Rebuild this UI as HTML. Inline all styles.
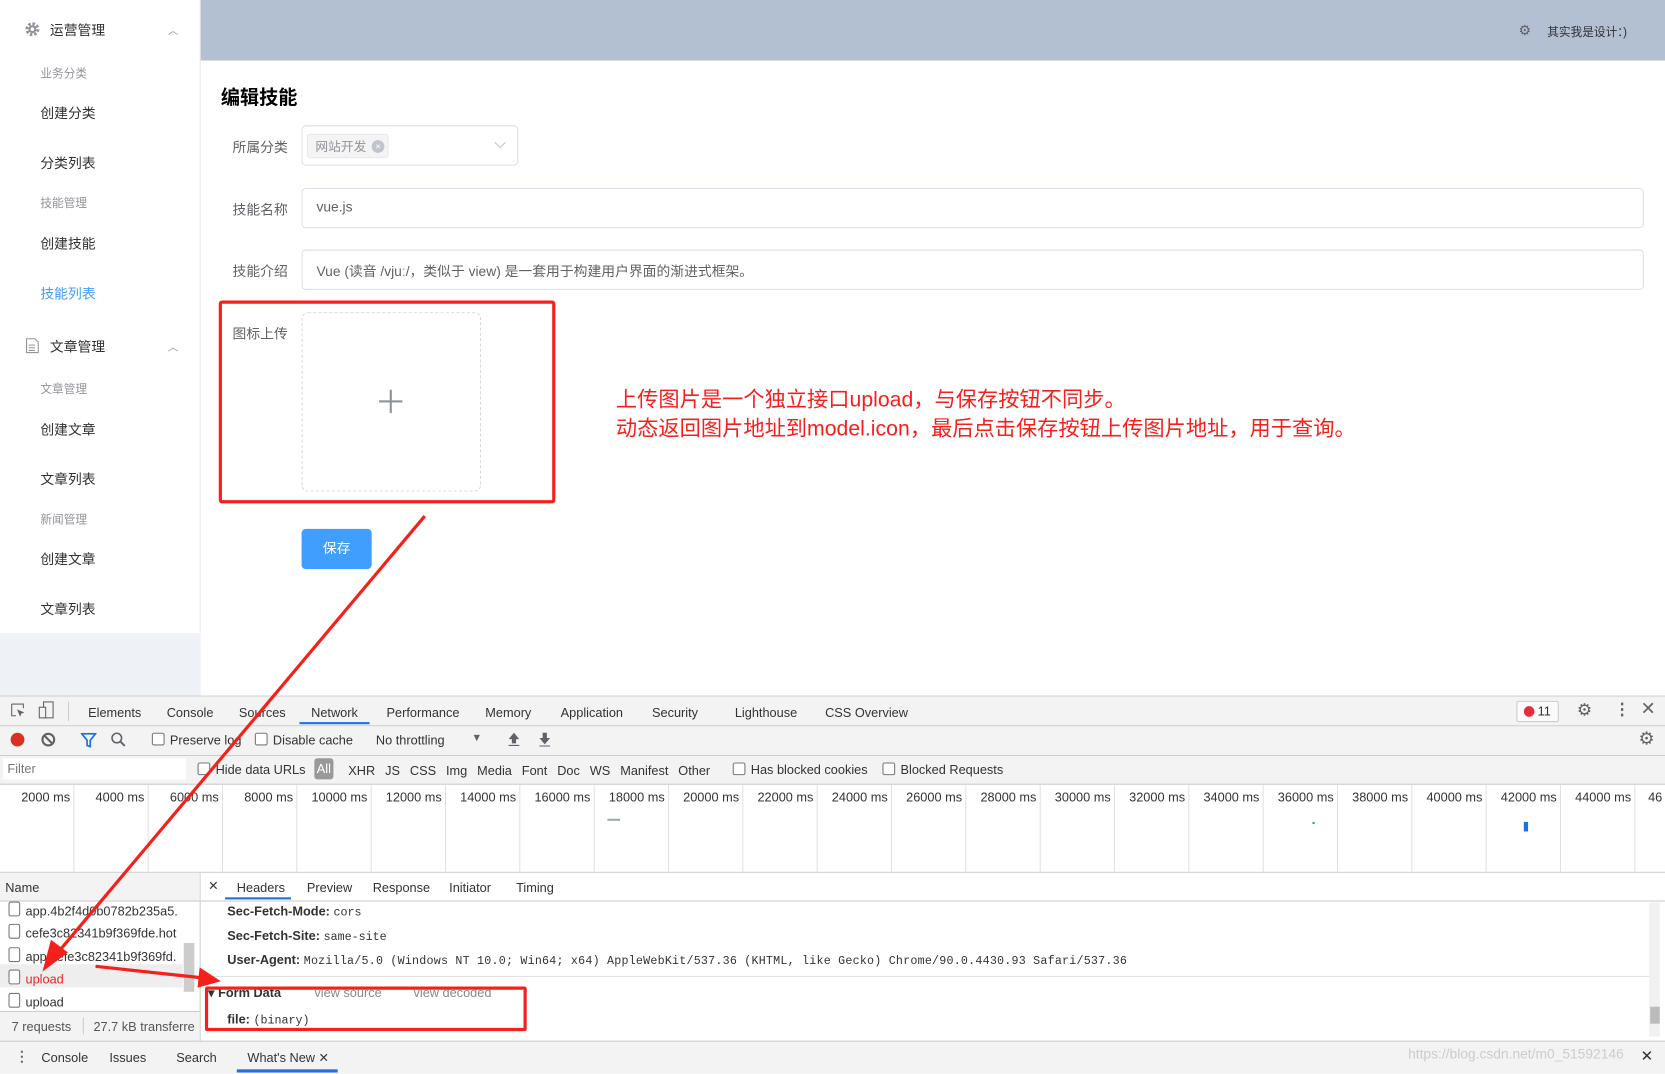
<!DOCTYPE html>
<html><head><meta charset="utf-8"><style>
html,body{margin:0;padding:0;width:1665px;height:1072px;overflow:hidden;background:#fff}
#w{position:absolute;left:0;top:0;width:1568px;height:1010px;transform:scale(1.0619);transform-origin:0 0;font-family:"Liberation Sans","Noto Sans CJK SC",sans-serif;}
.a{position:absolute;white-space:nowrap}
.sb{font-size:13px;color:#303133}
.grp{font-size:11px;color:#909399}
.lbl{font-size:13px;color:#606266}
.in{position:absolute;border:1px solid #dcdfe6;border-radius:4px;background:#fff;box-sizing:border-box}
.dt{font-size:12px;color:#333}
.cb{display:inline-block;width:10px;height:10px;border:1px solid #777;border-radius:2px;vertical-align:-1px;margin-right:5px;background:#fff}
</style></head><body><div id="w">
<div class="a" style="left:0;top:0;width:188px;height:596px;background:#fff;border-right:1px solid #e6e6e6"></div>
<div class="a" style="left:0;top:596px;width:189px;height:59px;background:#eef1f6"></div>
<svg class="a" style="left:23px;top:20px" width="15" height="15" viewBox="0 0 16 16"><circle cx="8" cy="8" r="5.5" fill="none" stroke="#909399" stroke-width="3" stroke-dasharray="2.5 1.8"/><circle cx="8" cy="8" r="4" fill="#909399"/><circle cx="8" cy="8" r="1.8" fill="#fff"/></svg>
<div class="a sb" style="left:47px;top:18px">运营管理</div>
<div class="a" style="left:158px;top:20px;color:#909399;font-size:10px">︿</div>
<div class="a grp" style="left:38px;top:61px">业务分类</div>
<div class="a sb" style="left:38px;top:96px">创建分类</div>
<div class="a sb" style="left:38px;top:143px">分类列表</div>
<div class="a grp" style="left:38px;top:183px">技能管理</div>
<div class="a sb" style="left:38px;top:219px">创建技能</div>
<div class="a sb" style="left:38px;top:266px;color:#409eff">技能列表</div>
<svg class="a" style="left:24px;top:318px" width="13" height="15" viewBox="0 0 13 15"><path d="M1 1h8l3 3v10H1z" fill="none" stroke="#909399"/><path d="M3 7h6M3 9.5h6M3 12h6" stroke="#909399"/></svg>
<div class="a sb" style="left:47px;top:316px">文章管理</div>
<div class="a" style="left:158px;top:318px;color:#909399;font-size:10px">︿</div>
<div class="a grp" style="left:38px;top:358px">文章管理</div>
<div class="a sb" style="left:38px;top:394px">创建文章</div>
<div class="a sb" style="left:38px;top:441px">文章列表</div>
<div class="a grp" style="left:38px;top:481px">新闻管理</div>
<div class="a sb" style="left:38px;top:516px">创建文章</div>
<div class="a sb" style="left:38px;top:563px">文章列表</div>
<div class="a" style="left:189px;top:0;width:1379px;height:57px;background:#b3c0d1"></div>
<div class="a" style="left:1430px;top:21px;color:#606266;font-size:13px">⚙</div>
<div class="a" style="left:1457px;top:22px;font-size:11px;color:#303133">其实我是设计：)</div>
<div class="a" style="left:208px;top:78px;font-size:18px;font-weight:bold;color:#000">编辑技能</div>
<div class="a lbl" style="left:219px;top:128px">所属分类</div>
<div class="in" style="left:284px;top:118px;width:204px;height:38px"></div>
<div class="a" style="left:289px;top:126px;width:77px;height:23px;background:#f4f4f5;border:1px solid #e9e9eb;border-radius:3px;box-sizing:border-box"></div>
<div class="a" style="left:297px;top:129px;font-size:12px;color:#909399">网站开发</div>
<div class="a" style="left:350px;top:132px;width:12px;height:12px;border-radius:6px;background:#c0c4cc;color:#fff;font-size:9px;text-align:center;line-height:12px">×</div>
<svg class="a" style="left:465px;top:133px" width="12" height="8"><path d="M1 1l5 5 5-5" fill="none" stroke="#c0c4cc"/></svg>
<div class="a lbl" style="left:219px;top:187px">技能名称</div>
<div class="in" style="left:284px;top:177px;width:1264px;height:38px"></div>
<div class="a" style="left:298px;top:187px;font-size:13px;color:#606266">vue.js</div>
<div class="a lbl" style="left:219px;top:245px">技能介绍</div>
<div class="in" style="left:284px;top:235px;width:1264px;height:38px"></div>
<div class="a" style="left:298px;top:245px;font-size:13px;color:#606266">Vue (读音 /vjuː/，类似于 view) 是一套用于构建用户界面的渐进式框架。</div>
<div class="a lbl" style="left:219px;top:304px">图标上传</div>
<div class="a" style="left:284px;top:294px;width:169px;height:169px;border:1px dashed #d9d9d9;border-radius:6px;box-sizing:border-box"></div>
<div class="a" style="left:357px;top:377px;width:22px;height:1.5px;background:#8c939d"></div>
<div class="a" style="left:367px;top:367px;width:1.5px;height:22px;background:#8c939d"></div>
<div class="a" style="left:206px;top:283px;width:317px;height:191px;border:3px solid #f5201a;border-radius:3px;box-sizing:border-box"></div>
<div class="a" style="left:580px;top:364px;font-size:20px;color:#f5201a;line-height:27px">上传图片是一个独立接口upload，与保存按钮不同步。<br>动态返回图片地址到model.icon，最后点击保存按钮上传图片地址，用于查询。</div>
<div class="a" style="left:284px;top:498px;width:66px;height:38px;background:#409eff;border-radius:4px;color:#fff;font-size:13px;text-align:center;line-height:38px">保存</div>
<div class="a" style="left:0;top:655px;width:1568px;height:355px;background:#fff;border-top:1px solid #ccc"></div>
<div class="a" style="left:0;top:656px;width:1568px;height:27px;background:#f3f3f3;border-bottom:1px solid #ccc"></div>
<svg class="a" style="left:9px;top:661px" width="16" height="16"><path d="M2 2h11v4M2 2v11h4" fill="none" stroke="#5f6368"/><path d="M7 7l7 3-3 1-1 3z" fill="#5f6368"/></svg>
<svg class="a" style="left:36px;top:660px" width="16" height="18"><rect x="5" y="1" width="9" height="15" fill="none" stroke="#5f6368"/><rect x="1" y="6" width="6" height="10" fill="#f3f3f3" stroke="#5f6368"/></svg>
<div class="a" style="left:64px;top:661px;width:1px;height:18px;background:#ccc"></div>
<div class="a dt" style="left:83px;top:664px">Elements</div>
<div class="a dt" style="left:157px;top:664px">Console</div>
<div class="a dt" style="left:225px;top:664px">Sources</div>
<div class="a dt" style="left:293px;top:664px">Network</div>
<div class="a" style="left:282px;top:680px;width:66px;height:2px;background:#1a73e8"></div>
<div class="a dt" style="left:364px;top:664px">Performance</div>
<div class="a dt" style="left:457px;top:664px">Memory</div>
<div class="a dt" style="left:528px;top:664px">Application</div>
<div class="a dt" style="left:614px;top:664px">Security</div>
<div class="a dt" style="left:692px;top:664px">Lighthouse</div>
<div class="a dt" style="left:777px;top:664px">CSS Overview</div>
<div class="a" style="left:1428px;top:660px;width:38px;height:18px;border:1px solid #ccc;border-radius:2px;background:#fafafa;font-size:12px;color:#333;line-height:18px"><span style="display:inline-block;width:10px;height:10px;border-radius:5px;background:#e52d3b;margin:0 3px 0 6px;vertical-align:-1px"></span>11</div>
<div class="a" style="left:1485px;top:659px;font-size:16px;color:#5f6368">⚙</div>
<div class="a" style="left:1520px;top:659px;font-size:15px;color:#5f6368;font-weight:bold">⋮</div>
<div class="a" style="left:1545px;top:658px;font-size:17px;color:#5f6368">✕</div>
<div class="a" style="left:0;top:684px;width:1568px;height:27px;background:#f3f3f3;border-bottom:1px solid #ccc"></div>
<div class="a" style="left:10px;top:690px;width:13px;height:13px;border-radius:7px;background:#d93025"></div>
<svg class="a" style="left:38px;top:689px" width="15" height="15"><circle cx="7.5" cy="7.5" r="5.5" fill="none" stroke="#5f6368" stroke-width="2"/><path d="M4 4l7 7" stroke="#5f6368" stroke-width="2"/></svg>
<svg class="a" style="left:76px;top:690px" width="15" height="14"><path d="M1 1h13l-5 6v6l-3-1V7z" fill="none" stroke="#1a73e8" stroke-width="1.6"/></svg>
<svg class="a" style="left:104px;top:689px" width="15" height="15"><circle cx="6" cy="6" r="4.5" fill="none" stroke="#5f6368" stroke-width="1.5"/><path d="M9.5 9.5l4 4" stroke="#5f6368" stroke-width="1.8"/></svg>
<div class="a dt" style="left:143px;top:690px"><span class="cb"></span>Preserve log</div>
<div class="a dt" style="left:240px;top:690px"><span class="cb"></span>Disable cache</div>
<div class="a dt" style="left:354px;top:690px">No throttling</div>
<div class="a" style="left:444px;top:690px;font-size:10px;color:#5f6368">▼</div>
<svg class="a" style="left:478px;top:689px" width="12" height="14"><path d="M6 1L1 7h3v4h4V7h3z" fill="#5f6368"/><path d="M1 13h10" stroke="#5f6368"/></svg>
<svg class="a" style="left:507px;top:689px" width="12" height="14"><path d="M6 12L1 6h3V1h4v5h3z" fill="#5f6368"/><path d="M1 13.5h10" stroke="#5f6368"/></svg>
<div class="a" style="left:1543px;top:686px;font-size:17px;color:#5f6368">⚙</div>
<div class="a" style="left:0;top:712px;width:1568px;height:26px;background:#f3f3f3;border-bottom:1px solid #ccc"></div>
<div class="a" style="left:3px;top:714px;width:168px;height:20px;background:#fff;font-size:12px;color:#777;line-height:20px;padding-left:4px">Filter</div>
<div class="a dt" style="left:186px;top:718px"><span class="cb"></span>Hide data URLs</div>
<div class="a" style="left:296px;top:714px;width:18px;height:20px;background:#999;border-radius:3px;color:#fff;font-size:12px;text-align:center;line-height:20px">All</div>
<div class="a dt" style="left:328px;top:719px;word-spacing:6px">XHR JS CSS Img Media Font Doc WS Manifest Other</div>
<div class="a dt" style="left:690px;top:718px"><span class="cb"></span>Has blocked cookies</div>
<div class="a dt" style="left:831px;top:718px"><span class="cb"></span>Blocked Requests</div>
<div class="a" style="left:0;top:739px;width:1568px;height:82px;background:linear-gradient(90deg,transparent 69px,#e0e0e0 69px,#e0e0e0 70px,transparent 70px);background-size:70px 82px;border-bottom:1px solid #ccc"></div>
<div id="tl"></div>
<div class="a" style="left:572px;top:771px;width:12px;height:2px;background:#9ab"></div>
<div class="a" style="left:1236px;top:774px;width:2px;height:2px;background:#1a9"></div>
<div class="a" style="left:1435px;top:774px;width:4px;height:9px;background:#1a73e8"></div>
<div class="a" style="left:0;top:822px;width:188px;height:158px;background:#fff;border-right:1px solid #ccc"></div>
<div class="a" style="left:0;top:822px;width:188px;height:26px;background:#f3f3f3;border-bottom:1px solid #ccc"></div>
<div class="a dt" style="left:5px;top:829px">Name</div>
<div class="a dt" style="left:8px;top:849px"><span class="cb" style="height:12px;width:9px"></span>app.4b2f4d0b0782b235a5.</div>
<div class="a dt" style="left:8px;top:870px"><span class="cb" style="height:12px;width:9px"></span>cefe3c82341b9f369fde.hot</div>
<div class="a dt" style="left:8px;top:892px"><span class="cb" style="height:12px;width:9px"></span>app.cefe3c82341b9f369fd.</div>
<div class="a" style="left:0;top:908px;width:172px;height:22px;background:#eee"></div>
<div class="a dt" style="left:8px;top:913px;color:#e22"><span class="cb" style="height:12px;width:9px"></span>upload</div>
<div class="a dt" style="left:8px;top:935px"><span class="cb" style="height:12px;width:9px"></span>upload</div>
<div class="a" style="left:173px;top:888px;width:10px;height:46px;background:#ccc"></div>
<div class="a" style="left:0;top:952px;width:188px;height:28px;background:#f3f3f3;border-top:1px solid #ccc"></div>
<div class="a dt" style="left:11px;top:960px;color:#555">7 requests</div>
<div class="a" style="left:78px;top:958px;width:1px;height:16px;background:#ccc"></div>
<div class="a dt" style="left:88px;top:960px;color:#555">27.7 kB transferre</div>
<div class="a" style="left:189px;top:822px;width:1379px;height:26px;background:#fff;border-bottom:1px solid #ccc"></div>
<div class="a dt" style="left:196px;top:827px">✕</div>
<div class="a dt" style="left:223px;top:829px">Headers</div>
<div class="a" style="left:212px;top:845px;width:62px;height:2px;background:#1a73e8"></div>
<div class="a dt" style="left:289px;top:829px">Preview</div>
<div class="a dt" style="left:351px;top:829px">Response</div>
<div class="a dt" style="left:423px;top:829px">Initiator</div>
<div class="a dt" style="left:486px;top:829px">Timing</div>
<div class="a" style="left:214px;top:851px;font-size:12px;color:#333"><b>Sec-Fetch-Mode:</b> <span style="font-family:'Liberation Mono',monospace;font-size:11px">cors</span></div>
<div class="a" style="left:214px;top:874px;font-size:12px;color:#333"><b>Sec-Fetch-Site:</b> <span style="font-family:'Liberation Mono',monospace;font-size:11px">same-site</span></div>
<div class="a" style="left:214px;top:897px;font-size:12px;color:#333"><b>User-Agent:</b> <span style="font-family:'Liberation Mono',monospace;font-size:11px;letter-spacing:0.2px">Mozilla/5.0 (Windows NT 10.0; Win64; x64) AppleWebKit/537.36 (KHTML, like Gecko) Chrome/90.0.4430.93 Safari/537.36</span></div>
<div class="a" style="left:189px;top:919px;width:1365px;height:1px;background:#e0e0e0"></div>
<div class="a" style="left:196px;top:928px;font-size:12px;color:#333"><b>▾ Form Data</b> <span style="color:#888;margin-left:28px">view source</span><span style="color:#888;margin-left:30px">view decoded</span></div>
<div class="a" style="left:214px;top:953px;font-size:12px;color:#333"><b>file:</b> <span style="font-family:'Liberation Mono',monospace;font-size:11px">(binary)</span></div>
<div class="a" style="left:1553px;top:850px;width:10px;height:126px;background:#f1f1f1"></div>
<div class="a" style="left:1554px;top:948px;width:9px;height:16px;background:#bbb"></div>
<div class="a" style="left:193px;top:929px;width:303px;height:42px;border:3px solid #f5201a;border-radius:2px;box-sizing:border-box"></div>
<div class="a" style="left:0;top:980px;width:1568px;height:30px;background:#f3f3f3;border-top:1px solid #ccc"></div>
<div class="a" style="left:14px;top:987px;font-size:13px;color:#5f6368;font-weight:bold">⋮</div>
<div class="a dt" style="left:39px;top:989px">Console</div>
<div class="a dt" style="left:103px;top:989px">Issues</div>
<div class="a dt" style="left:166px;top:989px">Search</div>
<div class="a dt" style="left:233px;top:989px">What's New ✕</div>
<div class="a" style="left:223px;top:1007px;width:95px;height:3px;background:#1a73e8"></div>
<div class="a" style="left:1326px;top:985px;font-size:13px;color:#ccc">https://blog.csdn.net/m0_51592146</div>
<div class="a" style="left:1545px;top:986px;font-size:14px;color:#333">✕</div>
<svg class="a" style="left:0;top:0" width="1568" height="1010"><g stroke="#f5201a" stroke-width="3" fill="#f5201a"><line x1="400" y1="486" x2="52" y2="900"/><line x1="90" y1="910" x2="192" y2="921"/></g><polygon points="40,915 48,885 64,897" fill="#f5201a"/><polygon points="208,924 188,911 186,930" fill="#f5201a"/></svg>
</div>
<script>
var tl=document.getElementById('tl');var h='';
for(var i=1;i<=22;i++){h+='<div class="a dt" style="left:'+(i*70-70)+'px;top:744px;width:66px;text-align:right">'+(i*2000)+' ms</div>';}
h+='<div class="a dt" style="left:1552px;top:744px">46</div>';
tl.innerHTML=h;
</script>
</body></html>
